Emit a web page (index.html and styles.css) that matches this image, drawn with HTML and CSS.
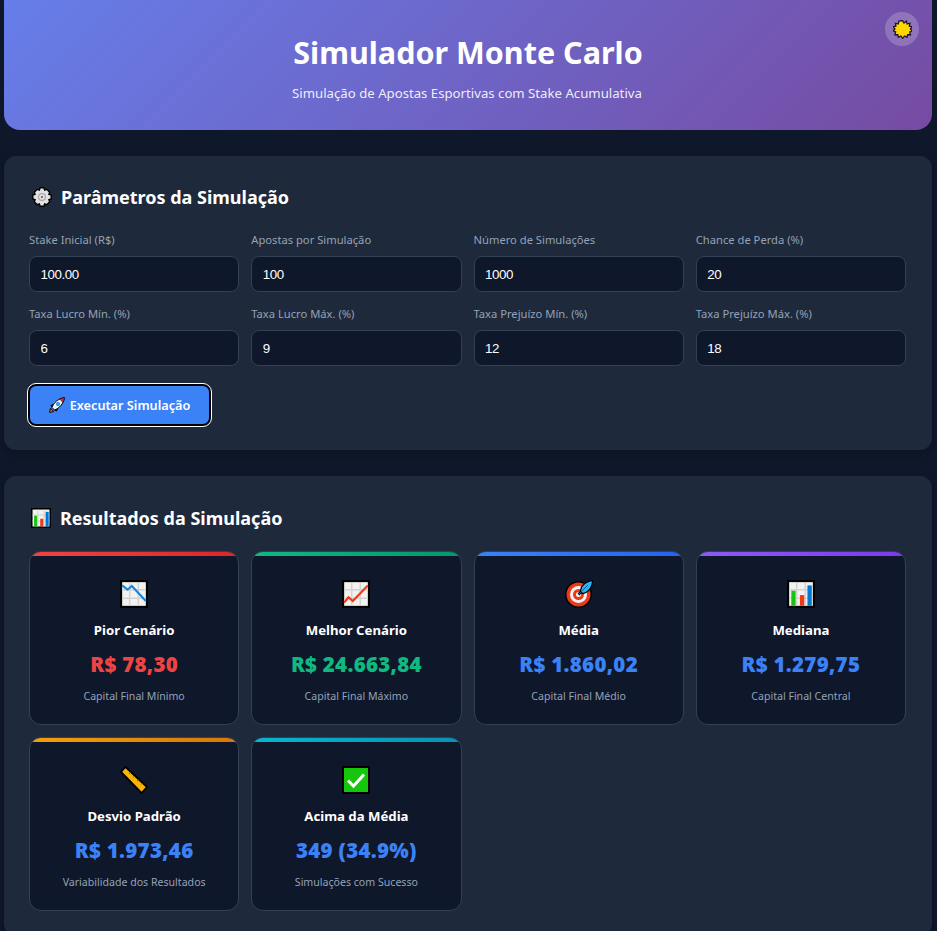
FILE: index.html
```html
<!DOCTYPE html>
<html lang="pt-BR">
<head>
<meta charset="utf-8">
<title>Simulador Monte Carlo</title>
<link rel="stylesheet" href="styles.css">
</head>
<body>
<svg class="defs" width="0" height="0" aria-hidden="true">
  <defs>
    <symbol id="i-chart-frame" viewBox="0 0 26 26">
      <rect x="1" y="1" width="24" height="24" fill="#f2f2f2" stroke="#000" stroke-width="2"/>
      <path d="M9 2v22M17 2v22M2 9h22M2 17h22" stroke="#d2d2d2" stroke-width="1.4"/>
    </symbol>
    <symbol id="i-down" viewBox="0 0 26 26">
      <use href="#i-chart-frame"/>
      <path d="M2 5l5 4 4-3.500 13 14" fill="none" stroke="#1b85dc" stroke-width="2"/>
    </symbol>
    <symbol id="i-up" viewBox="0 0 26 26">
      <use href="#i-chart-frame"/>
      <path d="M2 21l4-5 4 3.500L24 5" fill="none" stroke="#f03a17" stroke-width="2"/>
    </symbol>
    <symbol id="i-bars" viewBox="0 0 26 26">
      <use href="#i-chart-frame"/>
      <rect x="4" y="10" width="4" height="14" fill="#16c60c"/>
      <rect x="12" y="14" width="4" height="10" fill="#f03a17"/>
      <rect x="19" y="5" width="4" height="19" fill="#0078d4"/>
    </symbol>
    <symbol id="i-target" viewBox="0 0 28 28">
      <circle cx="13.500" cy="14.500" r="13.500" fill="#000"/>
      <circle cx="13.500" cy="14.500" r="12" fill="#e8391b"/>
      <circle cx="13.500" cy="14.500" r="8.500" fill="#f7f3f0"/>
      <circle cx="13.500" cy="14.500" r="5.500" fill="#e8391b"/>
      <circle cx="13.500" cy="14.500" r="2.500" fill="#f7f3f0"/>
      <path d="M13.500 14.500l6-6" stroke="#000" stroke-width="2.500"/>
      <path d="M15.500 10.500C16.500 5.500 21 1.500 27.500 .5 27.500 8 22.500 13 17.500 13.500z" fill="#29b6f6" stroke="#000" stroke-width="1.200"/>
      <path d="M14 14l9-9" stroke="#0b5fa5" stroke-width="1"/>
    </symbol>
    <symbol id="i-ruler" viewBox="0 0 28 28">
      <path d="M5.500 1L27 21 21.500 27 1 6z" fill="#f7b500" stroke="#000" stroke-width="1.800" stroke-linejoin="miter"/>
      <path d="M9 8l1.500-1.500M13 11.500l1.500-1.500M17 15l1.500-1.500M21 18.500l1.500-1.500" stroke="#8a6200" stroke-width="1"/>
    </symbol>
    <symbol id="i-check" viewBox="0 0 28 28">
      <rect x="1" y="1" width="26" height="26" fill="#16c60c" stroke="#000" stroke-width="2"/>
      <path d="M6 14.500l5.500 5.500L22 8.500" fill="none" stroke="#fff" stroke-width="3"/>
    </symbol>
    <symbol id="i-gear" viewBox="0 0 20 20">
      <path d="M8 .8h4l.6 2.400 2.200-.9 2.900 2.900-.9 2.200 2.400.6v4l-2.400.6.900 2.200-2.900 2.900-2.200-.9-.6 2.400H8l-.6-2.400-2.200.9-2.900-2.900.9-2.200L.8 12V8l2.400-.6-.9-2.200 2.900-2.900 2.200.9z" fill="#e2e2e2" stroke="#000" stroke-width="1.400" stroke-linejoin="round"/>
      <circle cx="10" cy="10" r="4" fill="#a6a6a6"/>
      <circle cx="10" cy="10" r="2.800" fill="#ececec"/>
      <circle cx="10" cy="10" r="1.300" fill="#777"/>
    </symbol>
    <symbol id="i-rocket" viewBox="0 0 16 16">
      <path d="M.6 15.400l.8-4.200 3.400 3.400z" fill="#f7630c" stroke="#000" stroke-width=".9"/>
      <path d="M4 7.500L1.800 8.500l1.500 2zM8.500 12l-1 2.200-2-1.500z" fill="#0b4f9c" stroke="#000" stroke-width=".9"/>
      <path d="M3 10.500C4.500 6 9 1.500 15.400.6 14.500 7 10 11.500 5.500 13z" fill="#eef2f5" stroke="#000" stroke-width="1"/>
      <path d="M10.800 1.600L15.400.6l-1 4.600c-1.300-.3-3-2-3.600-3.600z" fill="#d13438" stroke="#000" stroke-width=".6"/>
      <circle cx="9" cy="7" r="1.700" fill="#29b6f6" stroke="#0b4f9c" stroke-width=".5"/>
    </symbol>
    <symbol id="i-sun" viewBox="0 0 20 20">
      <path d="M10 .6l1.600 2.600 2.500-2 .7 3 3-.8-.6 3.100 3 .5-1.900 2.500 2.100 2.100-2.800.9.800 3-3.100-.2-.5 3-2.700-1.500-1.900 2.500-1.900-2.500-2.800 1.500-.4-3-3.100.2.800-3-2.900-1 2.200-2-2-2.500 3-.5-.6-3.100 3 .8.700-3z" fill="#ffd500" stroke="#17122e" stroke-width="1.300" stroke-linejoin="miter"/>
    </symbol>
  </defs>
</svg>
<div class="page">
  <header class="hero">
    <button class="theme" type="button" aria-label="Alternar tema"><svg class="sun"><use href="#i-sun"/></svg></button>
    <h1>Simulador Monte Carlo</h1>
    <p>Simulação de Apostas Esportivas com Stake Acumulativa</p>
  </header>

  <section class="panel params">
    <h2><svg class="gear"><use href="#i-gear"/></svg>Parâmetros da Simulação</h2>
    <div class="form-grid">
      <label class="field"><span>Stake Inicial (R$)</span><input value="100.00"></label>
      <label class="field"><span>Apostas por Simulação</span><input value="100"></label>
      <label class="field"><span>Número de Simulações</span><input value="1000"></label>
      <label class="field"><span>Chance de Perda (%)</span><input value="20"></label>
      <label class="field"><span>Taxa Lucro Mín. (%)</span><input value="6"></label>
      <label class="field"><span>Taxa Lucro Máx. (%)</span><input value="9"></label>
      <label class="field"><span>Taxa Prejuízo Mín. (%)</span><input value="12"></label>
      <label class="field"><span>Taxa Prejuízo Máx. (%)</span><input value="18"></label>
    </div>
    <button class="run" type="button"><svg class="rocket"><use href="#i-rocket"/></svg>Executar Simulação</button>
  </section>

  <section class="panel results">
    <h2><svg class="bars-title"><use href="#i-bars"/></svg>Resultados da Simulação</h2>
    <div class="cards">
      <article class="card red"><svg class="ico"><use href="#i-down"/></svg><h3>Pior Cenário</h3><div class="val v-red">R$ 78,30</div><p>Capital Final Mínimo</p></article>
      <article class="card green"><svg class="ico"><use href="#i-up"/></svg><h3>Melhor Cenário</h3><div class="val v-green">R$ 24.663,84</div><p>Capital Final Máximo</p></article>
      <article class="card blue"><svg class="ico"><use href="#i-target"/></svg><h3>Média</h3><div class="val">R$ 1.860,02</div><p>Capital Final Médio</p></article>
      <article class="card purple"><svg class="ico"><use href="#i-bars"/></svg><h3>Mediana</h3><div class="val">R$ 1.279,75</div><p>Capital Final Central</p></article>
      <article class="card amber"><svg class="ico"><use href="#i-ruler"/></svg><h3>Desvio Padrão</h3><div class="val">R$ 1.973,46</div><p>Variabilidade dos Resultados</p></article>
      <article class="card cyan"><svg class="ico"><use href="#i-check"/></svg><h3>Acima da Média</h3><div class="val">349 (34.9%)</div><p>Simulações com Sucesso</p></article>
    </div>
  </section>
</div>
</body>
</html>
```
FILE: styles.css
```css
* { box-sizing: border-box; }
html, body { margin: 0; height: 931px; overflow: hidden; background: #0f172a; }
body { font-family: "Noto Sans", "Open Sans", sans-serif; color: #fff; }
.defs { position: absolute; }
.page { width: 928px; margin-left: 4px; display: flex; flex-direction: column; gap: 26px; }

.hero {
  position: relative;
  height: 130px;
  padding-top: 30px;
  text-align: center;
  border-radius: 0 0 16px 16px;
  background: linear-gradient(135deg, #667eea 0%, #764ba2 100%);
}
.hero h1 { margin: 0; font-size: 30.500px; line-height: 44px; font-weight: 700; }
.hero p { margin: 9px 2px 0 0; font-size: 13.200px; line-height: 20px; color: rgba(255,255,255,.9); }
.theme {
  position: absolute; top: 12px; right: 13px;
  width: 34px; height: 34px; padding: 0; border: 0; border-radius: 50%;
  background: rgba(255,255,255,.2);
  display: flex; align-items: center; justify-content: center;
}
.sun { width: 19px; height: 19px; }

.panel {
  background: #1e293b;
  border-radius: 12px;
  padding: 25px 26px 25px 25px;
  box-shadow: 0 2px 6px rgba(0,0,0,.25);
}
.panel h2 {
  margin: 0; height: 32px;
  display: flex; align-items: center;
  font-size: 18px; font-weight: 700; line-height: 32px;
}
.results h2 { margin-top: 1px; }
.gear { width: 20px; height: 20px; margin-right: 9px; margin-left: 3px; }
.bars-title { width: 20px; height: 20px; margin-right: 9px; margin-left: 2px; }

.form-grid { margin-top: 18px; display: grid; grid-template-columns: repeat(4, 1fr); gap: 13px 12px; }
.field { display: flex; flex-direction: column; gap: 8px; }
.field span { font-size: 11.200px; line-height: 17px; color: #94a3b8; }
.field input {
  width: 100%; height: 36px; padding: 0 10.500px;
  background: #0f172a; color: #fff;
  border: 1px solid #334155; border-radius: 8px;
  font-family: "Liberation Sans", Arial, sans-serif; font-size: 13.330px; letter-spacing: -.4px;
}

.run {
  margin: 18px 0 -1px -1px; height: 42px; width: 183px; padding: 0;
  display: flex; align-items: center; justify-content: center; gap: 5px;
  background: #3b82f6; color: #fff;
  border: 2px solid #000; border-radius: 8px;
  outline: 1px solid #fff; outline-offset: 0;
  font-family: "Noto Sans", sans-serif; font-size: 12.700px; font-weight: 600;
}
.rocket { width: 16px; height: 16px; }

.cards { margin-top: 17px; display: grid; grid-template-columns: repeat(4, 1fr); gap: 12px; }
.card {
  position: relative; overflow: hidden;
  height: 174px; padding-top: 28px;
  background: #0f172a;
  border: 1px solid #334155;
  border-radius: 12px;
  text-align: center;
}
.card::before { content: ""; position: absolute; left: 0; right: 0; top: 0; height: 4px; }
.red::before { background: linear-gradient(90deg, #ef4444, #dc2626); }
.green::before { background: linear-gradient(90deg, #10b981, #059669); }
.blue::before { background: linear-gradient(90deg, #3b82f6, #2563eb); }
.purple::before { background: linear-gradient(90deg, #8b5cf6, #7c3aed); }
.amber::before { background: linear-gradient(90deg, #f59e0b, #d97706); }
.cyan::before { background: linear-gradient(90deg, #06b6d4, #0891b2); }
.ico { display: block; width: 28px; height: 28px; margin: 0 auto; }
.card h3 { margin: 13px 0 0; font-size: 13.200px; line-height: 18px; font-weight: 700; }
.val { margin-top: 11px; font-size: 20.500px; line-height: 28px; font-weight: 900; letter-spacing: .3px; color: #3b82f6; }
.v-red { color: #ef4444; }
.v-green { color: #10b981; }
.card p { margin: 10px 0 0; font-size: 10.600px; line-height: 16px; color: #94a3b8; }
```
